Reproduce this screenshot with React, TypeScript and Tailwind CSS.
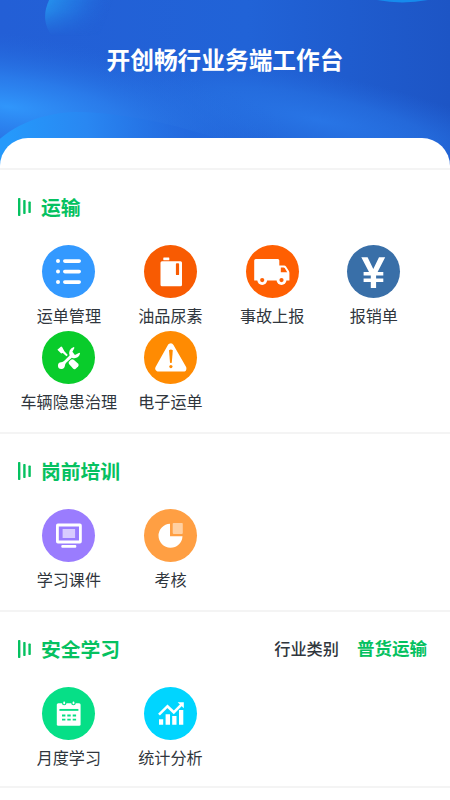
import type { ReactNode } from "react";

function HeaderArt() {
  return (
    <svg className="absolute inset-0 h-full w-full" viewBox="0 0 450 170" preserveAspectRatio="none" aria-hidden="true">
      <defs>
        <linearGradient id="base" x1="0" y1="0" x2="1" y2="0">
          <stop offset="0" stopColor="#235fd6" />
          <stop offset="0.55" stopColor="#2163d7" />
          <stop offset="1" stopColor="#1d55c5" />
        </linearGradient>
        <radialGradient id="glow" gradientUnits="userSpaceOnUse" cx="0" cy="0" r="1" gradientTransform="translate(8 108) rotate(8) scale(290 74)">
          <stop offset="0" stopColor="#3096fb" />
          <stop offset="0.4" stopColor="#2c83f0" stopOpacity="0.75" />
          <stop offset="1" stopColor="#2468dc" stopOpacity="0" />
        </radialGradient>
        <radialGradient id="glowRight" gradientUnits="userSpaceOnUse" cx="0" cy="0" r="1" gradientTransform="translate(320 122) rotate(12) scale(230 48)">
          <stop offset="0" stopColor="#2875e6" />
          <stop offset="0.5" stopColor="#2670e1" stopOpacity="0.7" />
          <stop offset="1" stopColor="#2468dc" stopOpacity="0" />
        </radialGradient>
        <linearGradient id="orb" gradientUnits="userSpaceOnUse" x1="46" y1="5" x2="104" y2="26">
          <stop offset="0" stopColor="#2590ec" />
          <stop offset="0.5" stopColor="#2376e2" stopOpacity="0.8" />
          <stop offset="1" stopColor="#2264d8" stopOpacity="0" />
        </linearGradient>
        <linearGradient id="orbFade" x1="0" y1="0" x2="0" y2="1">
          <stop offset="0" stopColor="white" />
          <stop offset="0.3" stopColor="#ddd" />
          <stop offset="0.95" stopColor="black" />
        </linearGradient>
        <mask id="orbMask">
          <rect x="0" y="0" width="160" height="38" fill="url(#orbFade)" />
        </mask>
        <linearGradient id="hill" gradientUnits="userSpaceOnUse" x1="10" y1="150" x2="185" y2="125">
          <stop offset="0" stopColor="#2599fb" />
          <stop offset="0.45" stopColor="#2987f2" />
          <stop offset="1" stopColor="#2166dd" stopOpacity="0.5" />
        </linearGradient>
      </defs>
      <rect width="450" height="170" fill="url(#base)" />
      <rect width="450" height="170" fill="url(#glowRight)" />
      <rect width="450" height="170" fill="url(#glow)" />
      <path d="M50 -2C43 12 43 25 53 38H150V-2Z" fill="url(#orb)" mask="url(#orbMask)" />
      <path d="M377 0Q402 5 428 0Z" fill="#168bed" />
      <path d="M-2 142C28 116 64 111 95 114C145 118 182 129 219 140V170H-2Z" fill="url(#hill)" />
    </svg>
  );
}

function Divider() {
  return <div className="h-[2px] shrink-0 bg-[#f4f4f4]" />;
}

function Heading({ title, children }: { title: string; children?: ReactNode }) {
  return (
    <div className="flex h-[75px] items-center pr-[23px] pb-[2px] pl-[18px]">
      <svg className="mr-[10px] h-[18px] w-[13px] shrink-0" viewBox="0 0 13 18" fill="#05c160" aria-hidden="true">
        <rect x="0" y="0" width="2.4" height="18" rx="0.7" />
        <rect x="5.2" y="2" width="2.4" height="14" rx="0.7" />
        <rect x="10.4" y="3.5" width="2.4" height="11.5" rx="0.7" />
      </svg>
      <h2 className="text-[19.8px] leading-[28px] font-bold text-[#05c160]">{title}</h2>
      {children}
    </div>
  );
}

function Item({ label, color, children }: { label: string; color: string; children: ReactNode }) {
  return (
    <div className="flex flex-col items-center">
      <div className={`h-[53px] w-[53px] rounded-full ${color}`}>
        <svg className="h-[53px] w-[53px]" viewBox="0 0 53 53" fill="white" aria-hidden="true">
          {children}
        </svg>
      </div>
      <span className="mt-px text-[16.1px] leading-[32.4px] whitespace-nowrap text-[#30363d]">{label}</span>
    </div>
  );
}

function Grid({ children }: { children: ReactNode }) {
  return <div className="ml-[18px] grid w-[406.6px] grid-cols-4">{children}</div>;
}

export default function App() {
  return (
    <main className="flex h-[800px] w-[450px] flex-col overflow-hidden bg-white font-['Noto_Sans_CJK_SC',sans-serif]">
      <header className="relative h-[168px] shrink-0 overflow-hidden">
        <HeaderArt />
        <div className="relative flex h-full flex-col">
          <div className="flex h-[138px] justify-center pt-[41px]">
            <h1 className="text-[23.7px] leading-[36px] font-bold text-white">开创畅行业务端工作台</h1>
          </div>
          <div className="h-[30px] rounded-t-[28px] bg-white" />
        </div>
      </header>
      <Divider />

      <section className="h-[262px] shrink-0">
        <Heading title="运输" />
        <Grid>
          <Item label="运单管理" color="bg-[#3399ff]">
            <circle cx="16" cy="16" r="2" />
            <circle cx="16" cy="26.5" r="2" />
            <circle cx="16" cy="37" r="2" />
            <rect x="21" y="14.2" width="18" height="3.7" rx="1.8" />
            <rect x="21" y="24.7" width="18" height="3.7" rx="1.8" />
            <rect x="21" y="35.2" width="18" height="3.7" rx="1.8" />
          </Item>
          <Item label="油品尿素" color="bg-[#f85b02]">
            <rect x="19.3" y="12.6" width="6" height="2.6" rx="0.5" />
            <path fillRule="evenodd" d="M18 16.3H36.5Q38 16.3 38 17.8V39.7Q38 41.2 36.5 41.2H18Q16.5 41.2 16.5 39.7V17.8Q16.5 16.3 18 16.3ZM32.8 18.3Q31.9 18.3 31.9 19.2V29.2Q31.9 30.1 32.8 30.1H34.2Q35.1 30.1 35.1 29.2V19.2Q35.1 18.3 34.2 18.3Z" />
          </Item>
          <Item label="事故上报" color="bg-[#ff5f02]">
            <path fillRule="evenodd" d="M9.8 14H31.8Q33.3 14 33.3 15.5V20.5H38.2Q39.3 20.5 40 21.5L42.9 26.1Q43.4 27 43.4 28V35.6H8.2V15.5Q8.2 14 9.8 14ZM34.8 22.4V27.2H41.2L38.7 23.1Q38.3 22.4 37.5 22.4Z" />
            <circle cx="16.2" cy="35.1" r="4.9" />
            <circle cx="35.5" cy="35.1" r="4.9" />
            <circle cx="16.2" cy="35.1" r="2.1" fill="#ff5f02" />
            <circle cx="35.5" cy="35.1" r="2.1" fill="#ff5f02" />
          </Item>
          <Item label="报销单" color="bg-[#396fa8]">
            <path d="M14.3 12.3H20.6L26.3 24.1L32 12.3H38.2L30.6 27H36.3V30.4H29.1V33.6H36.3V37H29.1V43H23.8V37H16.6V33.6H23.8V30.4H16.6V27H22Z" />
          </Item>
          <Item label="车辆隐患治理" color="bg-[#09cc2b]">
            <path d="M15.4 18.7L18.8 15.7Q19.5 15.3 20.1 16L22.4 20.3L25.8 23.9L24.4 25.3L20.8 21.9L19.2 22.6Z" />
            <path d="M28.9 28.7Q30.3 27.7 31.7 28.8L36.2 32.8Q37.3 34 36.1 35.4L33.7 37.7Q32.3 38.9 31 37.6L27 33.1Q26.1 31.7 27.2 30.4Z" />
            <path d="M19.6 38.1A3.4 3.4 0 0 1 19.2 31.2Q21 31 22.3 29.7L27.6 24.6Q25.7 18.9 31.7 16.1L32.5 16.8L30.4 20.8L32.9 24L37.4 21.7L38.1 22.6C37 26.8 33.5 28.1 29.8 26.7L24.4 31.5Q23 33 22.9 34.8Q22.6 37.8 19.6 38.1Z" />
          </Item>
          <Item label="电子运单" color="bg-[#ff8b02]">
            <path d="M26.7 15.5L14.5 37.4H39.2Z" stroke="white" strokeWidth="6.4" strokeLinejoin="round" />
            <path d="M25 19.3Q26.9 17.5 28.8 19.3L27.8 31.4Q26.9 32.4 26 31.4Z" fill="#ff8b02" />
            <circle cx="26.9" cy="35.6" r="1.6" fill="#ff8b02" />
          </Item>
        </Grid>
      </section>
      <Divider />

      <section className="h-[176px] shrink-0">
        <Heading title="岗前培训" />
        <Grid>
          <Item label="学习课件" color="bg-[#9a7cfe]">
            <rect x="15.4" y="16" width="23" height="17" rx="0.5" fill="none" stroke="white" strokeWidth="2.8" />
            <rect x="20.6" y="20" width="12.5" height="9" fill="#d8cbff" />
            <rect x="19.3" y="36" width="15" height="2.8" rx="1" />
          </Item>
          <Item label="考核" color="bg-[#ff9f43]">
            <path d="M26 14.7A12 12 0 1 0 38.5 27.2H26Z" />
            <rect x="28.7" y="14.1" width="10.1" height="10.8" rx="0.8" fill="#ffd0a2" />
          </Item>
        </Grid>
      </section>
      <Divider />

      <section className="h-[174px] shrink-0">
        <Heading title="安全学习">
          <div className="ml-auto flex items-center gap-[18px]">
            <span className="text-[16.2px] font-medium text-[#30363d]">行业类别</span>
            <span className="text-[17.5px] font-bold text-[#05c160]">普货运输</span>
          </div>
        </Heading>
        <Grid>
          <Item label="月度学习" color="bg-[#06df87]">
            <rect x="14.8" y="16.3" width="23.8" height="22.4" rx="1.5" />
            <circle cx="22.2" cy="16" r="2.3" fill="#06df87" />
            <circle cx="31.5" cy="16" r="2.3" fill="#06df87" />
            <rect x="21.3" y="14.6" width="1.8" height="2.6" rx="0.8" />
            <rect x="30.6" y="14.6" width="1.8" height="2.6" rx="0.8" />
            <path d="M17.4 22.9H36.4" stroke="#06df87" strokeWidth="1.9" />
            <path d="M20 28.5H23.4M25.3 28.5H28.7M30.7 28.5H34.1M20 32.6H23.4M25.3 32.6H28.7M30.7 32.6H34.1" stroke="#06df87" strokeWidth="1.9" />
          </Item>
          <Item label="统计分析" color="bg-[#00d5ff]">
            <path d="M15 32.2H19.2V37.8H15ZM21.6 27.2H26V37.8H21.6ZM28.2 29H32.5V37.8H28.2ZM35 23H39.3V37.8H35Z" />
            <path d="M15 27.7L23.5 19.2L29.8 25.3L37.4 17.6" fill="none" stroke="white" strokeWidth="2.6" />
            <path d="M33.7 15.3H39.8V21.3Z" />
          </Item>
        </Grid>
      </section>
      <Divider />
    </main>
  );
}
